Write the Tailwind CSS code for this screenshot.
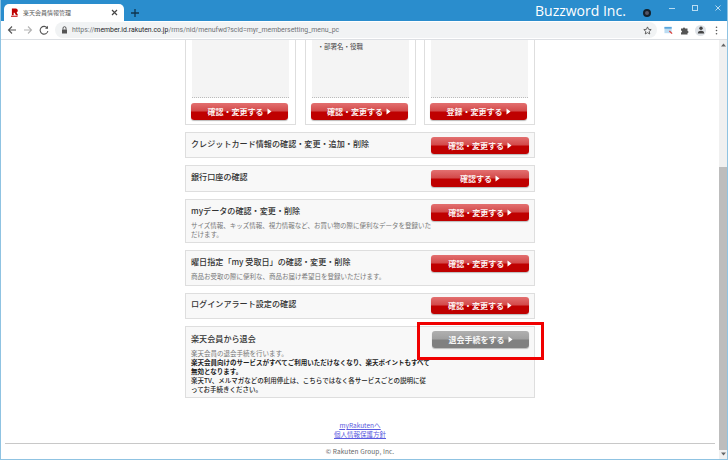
<!DOCTYPE html>
<html lang="ja">
<head>
<meta charset="utf-8">
<script src="https://cdn.jsdelivr.net/npm/@tailwindcss/browser@4"></script>
<title>楽天会員情報管理</title>
</head>
<body class="w-[728px] h-[460px] overflow-hidden bg-white font-['Noto_Sans_CJK_JP','Noto_Sans',sans-serif]">
<div class="relative w-[728px] h-[460px] flex flex-col border-x border-b border-[#8fc3e2] overflow-hidden">
  <!-- tab strip -->
  <div class="h-[21px] bg-[#2a8dcd] flex items-end -mx-px shrink-0">
    <div class="ml-1 w-[120px] h-[17px] shrink-0 bg-white rounded-t-[5px] flex items-center pl-[7px] pr-[6px]">
      <svg class="shrink-0" width="8" height="9" viewBox="0 0 9 10"><path d="M1 0.5h4.5a2.3 2.3 0 0 1 .8 4.4L8 8H5.6L4 5.2H3V8H1z" fill="#bf0000"/><path d="M0 8.6h8l-1 1.2H0z" fill="#bf0000"/></svg>
      <span class="ml-[4px] text-[6px] leading-none text-[#555] whitespace-nowrap">楽天会員情報管理</span>
      <svg class="ml-auto shrink-0" width="7" height="7" viewBox="0 0 7 7"><path d="M1 1l5 5M6 1l-5 5" stroke="#444" stroke-width="1.2"/></svg>
    </div>
    <svg class="ml-[6px] mb-[3px] shrink-0" width="10" height="10" viewBox="0 0 10 10"><path d="M5 1v8M1 5h8" stroke="#10344d" stroke-width="1.3"/></svg>
    <span class="ml-[395px] self-center text-[14px] leading-none text-white font-['Open_Sans'] whitespace-nowrap w-[92px] shrink-0">Buzzword Inc.</span>
    <span class="ml-[16px] self-center mt-[5px] w-[8px] h-[8px] rounded-full border-[2.5px] border-[#14202a] bg-[#556] shrink-0"></span>
    <div class="ml-[17px] self-start mt-[4px] flex items-center gap-[15px] shrink-0">
      <svg width="8" height="8" viewBox="0 0 8 8"><path d="M1 4.5h6" stroke="#b9dcf2"/></svg>
      <svg width="8" height="8" viewBox="0 0 8 8"><rect x="1.5" y="1.5" width="5" height="5" fill="none" stroke="#b9dcf2"/></svg>
      <svg width="8" height="8" viewBox="0 0 8 8"><path d="M1.5 1.5l5 5M6.5 1.5l-5 5" stroke="#b9dcf2"/></svg>
    </div>
  </div>
  <!-- toolbar -->
  <div class="h-[19px] -mx-px bg-white border-b border-[#dcdfe3] flex items-center shrink-0">
    <svg class="ml-[7px] shrink-0" width="10" height="10" viewBox="0 0 10 10"><path d="M9 5H1.5M5 1.5L1.5 5 5 8.5" fill="none" stroke="#555" stroke-width="1.1"/></svg>
    <svg class="ml-[6px] shrink-0" width="10" height="10" viewBox="0 0 10 10"><path d="M1 5h7.5M5 1.5L8.5 5 5 8.5" fill="none" stroke="#b4b4b4" stroke-width="1.1"/></svg>
    <svg class="ml-[6px] shrink-0" width="10" height="10" viewBox="0 0 10 10"><path d="M8.4 3.2A3.9 3.9 0 1 0 8.9 6" fill="none" stroke="#555" stroke-width="1.1"/><path d="M9 0.8v3H6z" fill="#555"/></svg>
    <div class="ml-[6px] w-[602px] h-[16px] shrink-0 rounded-full bg-[#f1f3f4] flex items-center pl-[6px] pr-[5px]">
      <svg class="shrink-0" width="7" height="8" viewBox="0 0 7 8"><rect x="1" y="3.5" width="5" height="4" fill="#555"/><path d="M2 3.5V2.2a1.5 1.5 0 0 1 3 0v1.3" fill="none" stroke="#555"/></svg>
      <span class="ml-[4px] text-[6.9px] leading-none font-['Roboto'] text-[#6f7276] whitespace-nowrap">https://<span class="text-[#26282b]">member.id.rakuten.co.jp</span>/rms/nid/menufwd?scid=myr_membersetting_menu_pc</span>
      <svg class="ml-auto shrink-0" width="9" height="9" viewBox="0 0 10 10"><path d="M5 1l1.2 2.7 2.9.3-2.2 2 .6 2.9L5 7.4 2.5 8.9l.6-2.9L.9 4l2.9-.3z" fill="none" stroke="#555"/></svg>
    </div>
    <svg class="ml-[7px] shrink-0" width="9" height="9" viewBox="0 0 10 9"><rect x="0.5" y="0.5" width="8" height="7" fill="#bcdcf2"/><rect x="0.5" y="0.5" width="8" height="2" fill="#5aa5dc"/><path d="M6 5l3 3" stroke="#e0403a" stroke-width="1.4"/></svg>
    <svg class="ml-[7px] shrink-0" width="9" height="9" viewBox="0 0 9 9"><path d="M1 2.5h2a1 1 0 0 1 2 0h2.5V5a1 1 0 0 1 0 2v1.5H1V6.5a1 1 0 0 0 0-2z" fill="#555"/></svg>
    <div class="ml-[6px] w-[11px] h-[11px] shrink-0 rounded-full bg-[#dfe3e8] flex items-center justify-center">
      <svg width="8" height="8" viewBox="0 0 8 8"><circle cx="4" cy="2.3" r="1.7" fill="#444"/><path d="M.8 7.5c0-2 1.5-2.7 3.2-2.7s3.2.7 3.2 2.7z" fill="#444"/></svg>
    </div>
    <svg class="ml-[9px] shrink-0" width="3" height="9" viewBox="0 0 3 9"><circle cx="1.5" cy="1.2" r=".8" fill="#555"/><circle cx="1.5" cy="4.5" r=".8" fill="#555"/><circle cx="1.5" cy="7.8" r=".8" fill="#555"/></svg>
  </div>
  <!-- page -->
  <div class="flex-1 flex min-h-0">
    <main class="flex-1 min-w-0 overflow-hidden">
      <div class="w-[350px] ml-[184px] flex flex-col">
        <!-- top cards -->
        <div class="h-[85px] flex gap-[8.5px] mb-[7px]">
          <section class="w-[111px] h-[85px] border border-t-0 border-[#dedede] px-[6px] flex flex-col">
            <div class="h-[58px] bg-[#f4f4f4] border-b border-dotted border-[#bbb]"></div>
            <a class="mt-[5px] -ml-[1px] w-[97px] h-[17px] rounded-[3px] bg-[linear-gradient(#e37070,#d34b4b_45%,#bf0000_55%,#bf0000)] shadow-[0_1px_1px_#bbb] flex items-center justify-center text-[8px] font-bold text-white/95 whitespace-nowrap">確認・変更する<svg class="ml-[3px]" width="5" height="7" viewBox="0 0 5 7"><path d="M.5 0.5l4 3-4 3z" fill="#fff"/></svg></a>
          </section>
          <section class="w-[111px] h-[85px] border border-t-0 border-[#dedede] px-[6px] flex flex-col">
            <div class="h-[58px] bg-[#f4f4f4] border-b border-dotted border-[#bbb] pl-[6px] pt-[1px] text-[6.5px] leading-[10px] text-[#444]">・部署名・役職</div>
            <a class="mt-[5px] -ml-[1px] w-[97px] h-[17px] rounded-[3px] bg-[linear-gradient(#e37070,#d34b4b_45%,#bf0000_55%,#bf0000)] shadow-[0_1px_1px_#bbb] flex items-center justify-center text-[8px] font-bold text-white/95 whitespace-nowrap">確認・変更する<svg class="ml-[3px]" width="5" height="7" viewBox="0 0 5 7"><path d="M.5 0.5l4 3-4 3z" fill="#fff"/></svg></a>
          </section>
          <section class="w-[111px] h-[85px] border border-t-0 border-[#dedede] px-[6px] flex flex-col">
            <div class="h-[58px] bg-[#f4f4f4] border-b border-dotted border-[#bbb]"></div>
            <a class="mt-[5px] -ml-[1px] w-[97px] h-[17px] rounded-[3px] bg-[linear-gradient(#e37070,#d34b4b_45%,#bf0000_55%,#bf0000)] shadow-[0_1px_1px_#bbb] flex items-center justify-center text-[8px] font-bold text-white/95 whitespace-nowrap">登録・変更する<svg class="ml-[3px]" width="5" height="7" viewBox="0 0 5 7"><path d="M.5 0.5l4 3-4 3z" fill="#fff"/></svg></a>
          </section>
        </div>
        <!-- rows -->
        <div class="flex flex-col gap-[7px]">
          <section class="h-[26px] bg-[#f8f8f8] border border-[#dedede] flex justify-between pl-[5px] pr-[5px] pt-[4px]">
            <h2 class="text-[8.1px] leading-[14px] font-medium text-[#333] whitespace-nowrap">クレジットカード情報の確認・変更・追加・削除</h2>
            <a class="w-[98px] h-[17px] rounded-[3px] bg-[linear-gradient(#e37070,#d34b4b_45%,#bf0000_55%,#bf0000)] shadow-[0_1px_1px_#bbb] flex items-center justify-center text-[8px] font-bold text-white/95 whitespace-nowrap">確認・変更する<svg class="ml-[3px]" width="5" height="7" viewBox="0 0 5 7"><path d="M.5 0.5l4 3-4 3z" fill="#fff"/></svg></a>
          </section>
          <section class="h-[27px] bg-[#f8f8f8] border border-[#dedede] flex justify-between pl-[5px] pr-[5px] pt-[4px]">
            <h2 class="text-[8.1px] leading-[14px] font-medium text-[#333] whitespace-nowrap">銀行口座の確認</h2>
            <a class="w-[98px] h-[17px] rounded-[3px] bg-[linear-gradient(#e37070,#d34b4b_45%,#bf0000_55%,#bf0000)] shadow-[0_1px_1px_#bbb] flex items-center justify-center text-[8px] font-bold text-white/95 whitespace-nowrap">確認する<svg class="ml-[3px]" width="5" height="7" viewBox="0 0 5 7"><path d="M.5 0.5l4 3-4 3z" fill="#fff"/></svg></a>
          </section>
          <section class="h-[44px] bg-[#f8f8f8] border border-[#dedede] flex justify-between pl-[5px] pr-[5px] pt-[4px]">
            <div class="w-[241px]">
              <h2 class="text-[8.1px] leading-[14px] font-medium text-[#333] whitespace-nowrap">myデータの確認・変更・削除</h2>
              <p class="mt-[3px] text-[6.5px] leading-[9px] text-[#777]">サイズ情報、キッズ情報、視力情報など、お買い物の際に便利なデータを登録いただけます。</p>
            </div>
            <a class="w-[98px] h-[17px] rounded-[3px] bg-[linear-gradient(#e37070,#d34b4b_45%,#bf0000_55%,#bf0000)] shadow-[0_1px_1px_#bbb] flex items-center justify-center text-[8px] font-bold text-white/95 whitespace-nowrap">確認・変更する<svg class="ml-[3px]" width="5" height="7" viewBox="0 0 5 7"><path d="M.5 0.5l4 3-4 3z" fill="#fff"/></svg></a>
          </section>
          <section class="h-[36px] bg-[#f8f8f8] border border-[#dedede] flex justify-between pl-[5px] pr-[5px] pt-[4px]">
            <div class="w-[241px]">
              <h2 class="text-[8.1px] leading-[14px] font-medium text-[#333] whitespace-nowrap">曜日指定「my 受取日」の確認・変更・削除</h2>
              <p class="mt-[3px] text-[6.5px] leading-[9px] text-[#777] whitespace-nowrap">商品お受取の際に便利な、商品お届け希望日を登録いただけます。</p>
            </div>
            <a class="w-[98px] h-[17px] rounded-[3px] bg-[linear-gradient(#e37070,#d34b4b_45%,#bf0000_55%,#bf0000)] shadow-[0_1px_1px_#bbb] flex items-center justify-center text-[8px] font-bold text-white/95 whitespace-nowrap">確認・変更する<svg class="ml-[3px]" width="5" height="7" viewBox="0 0 5 7"><path d="M.5 0.5l4 3-4 3z" fill="#fff"/></svg></a>
          </section>
          <section class="h-[26px] bg-[#f8f8f8] border border-[#dedede] flex justify-between pl-[5px] pr-[5px] pt-[3px]">
            <h2 class="text-[8.1px] leading-[14px] font-medium text-[#333] whitespace-nowrap">ログインアラート設定の確認</h2>
            <a class="w-[98px] h-[17px] rounded-[3px] bg-[linear-gradient(#e37070,#d34b4b_45%,#bf0000_55%,#bf0000)] shadow-[0_1px_1px_#bbb] flex items-center justify-center text-[8px] font-bold text-white/95 whitespace-nowrap">確認・変更する<svg class="ml-[3px]" width="5" height="7" viewBox="0 0 5 7"><path d="M.5 0.5l4 3-4 3z" fill="#fff"/></svg></a>
          </section>
          <section class="h-[72px] bg-[#f8f8f8] border border-[#dedede] flex justify-between pl-[5px] pr-[5px] pt-[4px]">
            <div class="w-[244px]">
              <h2 class="mt-[1px] text-[8.1px] leading-[14px] font-medium text-[#333] whitespace-nowrap">楽天会員から退会</h2>
              <p class="mt-[3px] text-[6.5px] leading-[9px] text-[#777]">楽天会員の退会手続を行います。<br><strong class="font-bold text-[#222]">楽天会員向けのサービスがすべてご利用いただけなくなり、楽天ポイントもすべて無効となります。</strong><br><span class="text-[#222] font-medium">楽天TV、メルマガなどの利用停止は、こちらではなく各サービスごとの説明に従ってお手続きください。</span></p>
            </div>
            <a class="w-[98px] h-[17px] rounded-[3px] bg-[linear-gradient(#b0b0b0,#a0a0a0_45%,#808080_55%,#808080)] shadow-[0_1px_1px_#bbb] flex items-center justify-center text-[8px] font-bold text-white/95 whitespace-nowrap">退会手続をする<svg class="ml-[3px]" width="5" height="7" viewBox="0 0 5 7"><path d="M.5 0.5l4 3-4 3z" fill="#fff"/></svg></a>
          </section>
        </div>
      </div>
      <!-- footer -->
      <nav class="mt-[23px] flex flex-col items-center text-[6.5px] leading-[9px] text-[#5a5ae0] underline">
        <a>myRakutenへ</a>
        <a>個人情報保護方針</a>
      </nav>
      <footer class="mt-[4px] mx-[4px] border-t border-[#c8c8c8] pt-[3px] text-center text-[6.5px] leading-[9px] text-[#666] tracking-[0.1px]">© Rakuten Group, Inc.</footer>
    </main>
    <!-- scrollbar -->
    <div class="w-[8px] shrink-0 bg-[#f0f0f0] flex flex-col items-center justify-between">
      <div class="w-full flex flex-col">
        <svg class="mx-auto mt-[3px]" width="5" height="4" viewBox="0 0 5 4"><path d="M2.5 0.5L5 3.5H0z" fill="#666"/></svg>
        <div class="mt-[120px] w-full h-[283px] bg-[#bdbdbd]"></div>
      </div>
      <svg class="mb-[3px]" width="5" height="4" viewBox="0 0 5 4"><path d="M2.5 3.5L5 .5H0z" fill="#666"/></svg>
    </div>
  </div>
  <!-- annotation -->
  <div class="absolute left-[416px] top-[322px] w-[127px] h-[38px] border-[3px] border-[#f00000]"></div>
</div>
</body>
</html>
